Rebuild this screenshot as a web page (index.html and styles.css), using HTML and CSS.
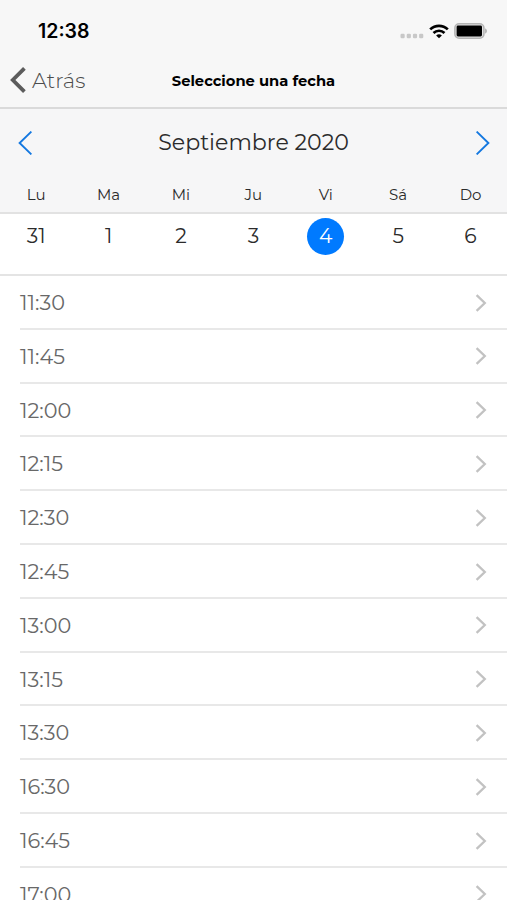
FILE: index.html
```html
<!DOCTYPE html>
<html lang="es">
<head>
    <meta charset="UTF-8">
    <meta name="viewport" content="width=device-width, initial-scale=1.0">
    <title>Seleccione una fecha</title>
    <link rel="stylesheet" href="styles.css">
</head>
<body>

    <header class="top">
        <div class="status">
            <span class="clock">12:38</span>
            <svg class="signal" width="24" height="6" viewBox="0 0 24 6" fill="#c8c8c8">
                <rect x="0.5" y="0.7" width="4.2" height="4.6" rx="1.2"/>
                <rect x="6.7" y="0.7" width="4.2" height="4.6" rx="1.2"/>
                <rect x="12.9" y="0.7" width="4.2" height="4.6" rx="1.2"/>
                <rect x="19.1" y="0.7" width="4.2" height="4.6" rx="1.2"/>
            </svg>
            <svg class="wifi" width="20" height="15" viewBox="0 0 20 15" fill="none" stroke="#000" stroke-width="2.7">
                <path d="M1.2 5.4C6.2 0.6 13.8 0.6 18.8 5.4"/>
                <path d="M4.5 8.9C7.6 6 12.4 6 15.5 8.9"/>
                <path d="M10 14.3L7.1 11.5Q10 9.1 12.9 11.5Z" fill="#000" stroke="none"/>
            </svg>
            <svg class="battery" width="33" height="16" viewBox="0 0 33 16">
                <rect x="0.9" y="0.8" width="29" height="14.4" rx="4.2" fill="#e4e4e4" stroke="#b5b5b5" stroke-width="1.6"/>
                <rect x="2.6" y="2.5" width="25.4" height="11" rx="1.4" fill="#000"/>
                <path d="M31.2 5.3Q32.9 6.2 32.9 8T31.2 10.7Z" fill="#aaa"/>
            </svg>
        </div>
        <nav class="navbar">
            <div class="back">
                <svg width="16" height="26" viewBox="0 0 16 26" fill="none" stroke="#5c5c5c" stroke-width="3.8">
                    <path d="M14.4 1.4L2.8 13L14.4 24.6"/>
                </svg>
                <span class="back-text">Atrás</span>
            </div>
            <h1>Seleccione una fecha</h1>
        </nav>
    </header>

    <section class="calendar">
        <div class="month">
            <svg width="14" height="24" viewBox="0 0 14 24" fill="none" stroke="#1478e0" stroke-width="1.9">
                <path d="M13.4 0.6L1.6 12L13.4 23.4"/>
            </svg>
            <span class="month-name">Septiembre 2020</span>
            <svg width="14" height="24" viewBox="0 0 14 24" fill="none" stroke="#1478e0" stroke-width="1.9">
                <path d="M0.6 0.6L12.4 12L0.6 23.4"/>
            </svg>
        </div>
        <div class="week names">
            <span>Lu</span><span>Ma</span><span>Mi</span><span>Ju</span><span>Vi</span><span>Sá</span><span>Do</span>
        </div>
        <div class="week days">
            <span>31</span><span>1</span><span>2</span><span>3</span><span class="selected">4</span><span>5</span><span>6</span>
        </div>
    </section>

    <ul class="hours" id="hours"></ul>

    <script>
        const hours = ["11:30", "11:45", "12:00", "12:15", "12:30", "12:45", "13:00", "13:15", "13:30", "16:30", "16:45", "17:00"];

        const list = document.getElementById("hours");
        hours.forEach(hour => {
            list.innerHTML += `<li>
                <span>${hour}</span>
                <svg width="12" height="18" viewBox="0 0 12 18" fill="none" stroke="#c2c2c2" stroke-width="2.3">
                    <path d="M1.6 1.2L9.8 9L1.6 16.8"/>
                </svg>
            </li>`;
        });
    </script>

</body>
</html>
```

FILE: styles.css
```css
* {
    box-sizing: border-box;
}
body {
    margin: 0;
    height: 900px;
    overflow: hidden;
    background-color: white;
    color: #2b2b2b;
    font-family: Montserrat, Inter, "Liberation Sans", sans-serif;
}
svg {
    display: block;
    flex: none;
}
.top {
    height: 109px;
    background-color: #f7f7f7;
    border-bottom: 2px solid #dadada;
}
.status {
    display: flex;
    align-items: center;
    height: 54px;
    padding: 8px 20.5px 0 38px;
}
.clock {
    flex: 1;
    font-family: Inter, sans-serif;
    font-size: 19.5px;
    font-weight: 600;
    color: #000;
}
.signal {
    margin-top: 10px;
}
.wifi {
    margin-left: 5px;
}
.battery {
    margin-left: 5px;
}
.navbar {
    display: grid;
    grid-template-columns: 1fr auto 1fr;
    align-items: center;
    height: 53px;
}
.back {
    display: flex;
    align-items: center;
    padding-left: 10px;
    margin-top: -2px;
}
.back-text {
    margin: 0 0 0 6px;
    font-size: 21.2px;
    font-weight: 300;
    color: #4c4c4c;
}
h1 {
    margin: 0;
    font-size: 14.7px;
    font-weight: 700;
    color: #000;
}
.calendar {
    height: 167px;
    border-bottom: 2px solid #e4e4e4;
}
.month {
    display: flex;
    justify-content: space-between;
    align-items: center;
    height: 67px;
    padding: 0 17px 0 18px;
    background-color: #f6f6f7;
}
.month-name {
    margin-right: 1px;
    font-size: 22.1px;
}
.week {
    display: grid;
    grid-template-columns: repeat(7, 72.4px);
    justify-items: center;
}
.names {
    height: 38px;
    padding-top: 9px;
    background-color: #f6f6f7;
    border-bottom: 2px solid #e2e2e2;
    font-size: 15px;
    line-height: 20px;
}
.days {
    padding-top: 4px;
    font-size: 20.3px;
    line-height: 36px;
}
.selected {
    width: 37px;
    height: 37px;
    border-radius: 50%;
    background-color: #007aff;
    color: white;
    text-align: center;
}
.hours {
    margin: 0;
    padding: 0 0 0 20px;
    list-style: none;
}
.hours li {
    display: flex;
    justify-content: space-between;
    align-items: center;
    height: 53.8px;
    padding: 1.4px 20px 0 0;
    border-bottom: 2px solid #e8e8e8;
    font-size: 20.8px;
    color: #686868;
}
```
